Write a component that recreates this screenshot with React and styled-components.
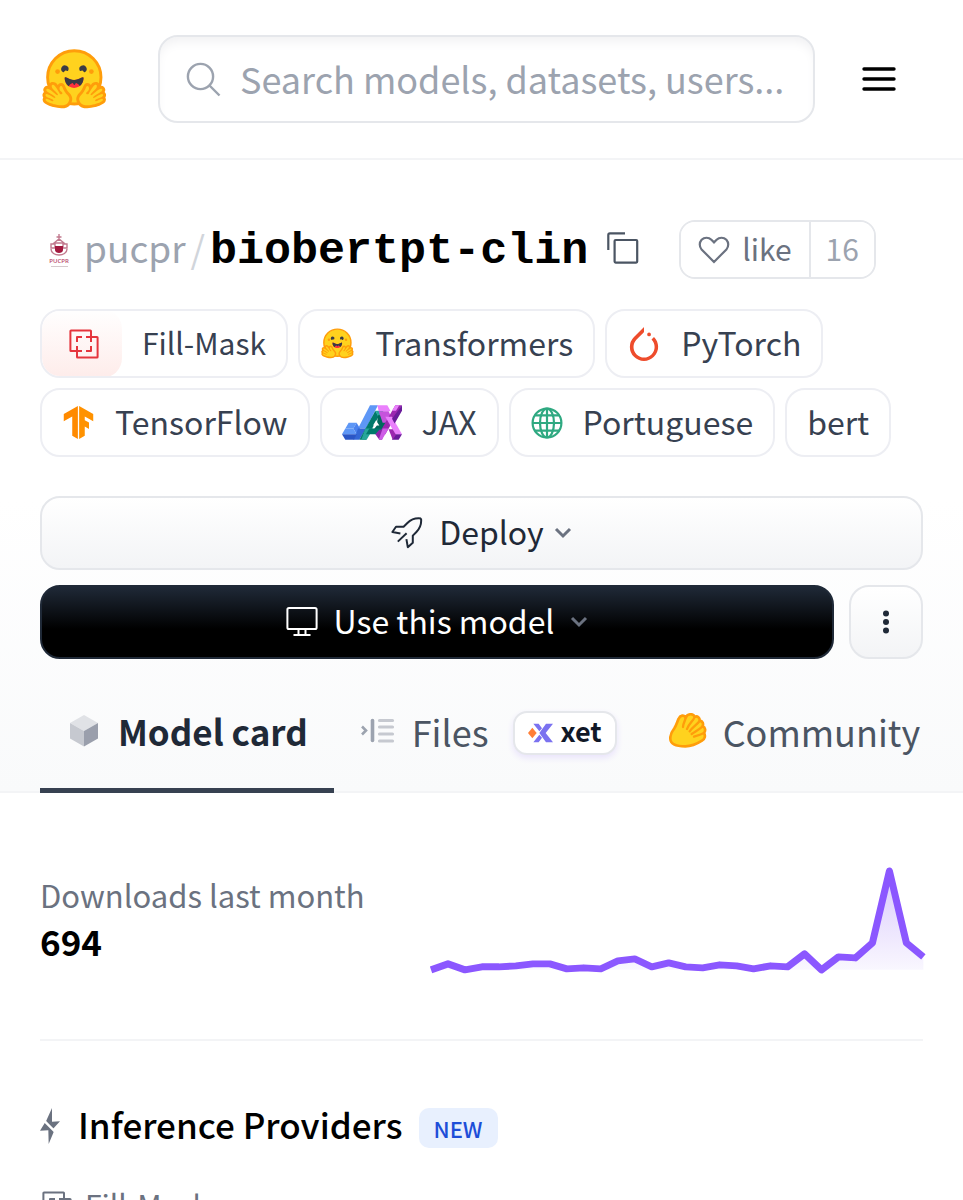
import React from 'react';
import styled, { createGlobalStyle } from 'styled-components';

const GlobalStyle = createGlobalStyle`
  *, *::before, *::after {
    box-sizing: border-box;
  }

  body {
    margin: 0;
    background: #fff;
    color: #000;
    font-family: 'Noto Sans CJK SC', 'Open Sans', sans-serif;
    font-size: 32px;
    line-height: 40px;
  }

  a {
    color: inherit;
    text-decoration: none;
  }

  button, input {
    font: inherit;
    color: inherit;
  }

  svg {
    display: block;
    flex-shrink: 0;
  }

  h1, h2, p, dl, dd {
    margin: 0;
  }
`;

const TopBar = styled.header`
  display: flex;
  align-items: center;
  height: 160px;
  padding: 0 40px;
  border-bottom: 2px solid #f3f4f6;
`;

const SearchBox = styled.label`
  flex: 1;
  min-width: 0;
  display: flex;
  align-items: center;
  gap: 18px;
  height: 88px;
  margin: 0 20px 0 49px;
  padding: 0 24px 0 26px;
  border: 2px solid #e5e7eb;
  border-radius: 20px;
  box-shadow: inset 0 8px 12px -4px #f0f0f2;
  color: #9ca3af;
`;

const SearchInput = styled.input`
  flex: 1;
  min-width: 0;
  height: 60px;
  padding: 0 0 2px;
  border: 0;
  outline: 0;
  background: transparent;
  font-size: 36px;
  line-height: 56px;
  text-overflow: ellipsis;

  &::placeholder {
    color: #9ca3af;
    opacity: 1;
  }
`;

const MenuButton = styled.button`
  display: flex;
  align-items: center;
  justify-content: center;
  width: 88px;
  height: 88px;
  padding: 0;
  border: 0;
  background: none;
`;

const ModelHeader = styled.section`
  padding: 60px 40px 0;
  border-bottom: 2px solid #f3f4f6;
  background: linear-gradient(#fff 54%, #f9fafb);
`;

// the typeface sits low in its line box, so labels next to icons are lifted
const Label = styled.span`
  padding-bottom: 4px;
`;

const TitleRow = styled.div`
  display: flex;
  align-items: center;
  height: 59px;
`;

const Title = styled.h1`
  display: flex;
  align-items: baseline;
  font-size: 37px;
  font-weight: 400;
  line-height: 56px;

  svg {
    align-self: center;
  }
`;

const Owner = styled.a`
  margin-left: 6px;
  color: #9ca3af;
`;

const Slash = styled.span`
  margin: 0 5px;
  color: #d1d5db;
`;

const ModelName = styled.a`
  font-family: 'Liberation Mono', monospace;
  font-size: 45px;
  font-weight: 700;
`;

const CopyButton = styled.button`
  margin: 0 40px 0 19px;
  padding: 0 0 4px;
  border: 0;
  background: none;
  color: #4b5563;
`;

const LikeGroup = styled.div`
  display: flex;
  height: 59px;
  border: 2px solid #e5e7eb;
  border-radius: 16px;
  font-size: 30px;
  overflow: hidden;
`;

const LikeButton = styled.button`
  display: flex;
  align-items: center;
  gap: 12px;
  padding: 0 17px;
  border: 0;
  background: #fff;
  color: #6b7280;
`;

const LikeCount = styled.button`
  padding: 0 15px 4px;
  border: 0;
  border-left: 2px solid #e5e7eb;
  background: #fff;
  color: #9ca3af;
`;

const Tags = styled.div`
  display: flex;
  flex-wrap: wrap;
  gap: 10px;
  margin-top: 30px;
`;

const Tag = styled.a`
  display: flex;
  align-items: center;
  gap: 20px;
  height: 69px;
  padding: 0 20px;
  border: 2px solid #edeef3;
  border-radius: 20px;
  background: #fff;
  color: #374151;
  font-size: ${(props) => (props.$task ? '30px' : '32px')};
  overflow: hidden;
`;

const TaskIcon = styled.span`
  display: flex;
  align-items: center;
  justify-content: center;
  width: 80px;
  height: 69px;
  margin-left: -20px;
  padding-left: 4px;
  border-radius: 20px;
  background: linear-gradient(#fff, #feecea);
  color: #e5353d;
`;

const Actions = styled.div`
  display: flex;
  flex-wrap: wrap;
  gap: 15px;
  margin-top: 39px;
`;

const ActionButton = styled.button`
  display: flex;
  align-items: center;
  justify-content: center;
  gap: ${(props) => (props.$dark ? '16px' : '10px')};
  flex: ${(props) => props.$flex};
  height: 74px;
  padding: 0;
  border: 2px solid ${(props) => (props.$dark ? '#1f2937' : '#e5e7eb')};
  border-radius: 20px;
  background: ${(props) => (props.$dark ? 'linear-gradient(#1f2937, #000 60%)' : 'linear-gradient(#fff, #f3f4f6)')};
  color: ${(props) => (props.$dark ? '#fff' : '#1f2937')};
`;

const DeployLabel = styled(Label)`
  margin-left: 6px;
`;

const Tabs = styled.nav`
  display: flex;
  margin: 14px -40px -2px 0;
  overflow: hidden;
`;

const Tab = styled.a`
  display: flex;
  align-items: center;
  gap: 16px;
  height: 120px;
  padding: 0 26px;
  border-bottom: 5px solid ${(props) => (props.$active ? '#374151' : 'transparent')};
  color: ${(props) => (props.$active ? '#1f2937' : '#4b5563')};
  font-size: ${(props) => (props.$active ? '35px' : '36px')};
  font-weight: ${(props) => (props.$active ? 700 : 400)};
  white-space: nowrap;
`;

const XetBadge = styled.span`
  display: flex;
  align-items: center;
  gap: 8px;
  height: 44px;
  margin: 4px 0 0 8px;
  padding: 0 13px;
  border: 2px solid #e5e7eb;
  border-radius: 14px;
  background: #fff;
  box-shadow: 0 3px 6px #e9e3fb;
  color: #111827;
  font-size: 27px;
  font-weight: 700;
`;

const Content = styled.main`
  padding: 0 40px;
`;

const Downloads = styled.section`
  display: flex;
  align-items: center;
  gap: 66px;
  padding: 75px 0 66px;
  border-bottom: 2px solid #f3f4f6;
`;

const DownloadsStat = styled.dl`
  padding-bottom: 6px;
`;

const DownloadsLabel = styled.dt`
  color: #6b7280;
  font-size: 31px;
  line-height: 48px;
  white-space: nowrap;
`;

const DownloadsCount = styled.dd`
  font-size: 35px;
  font-weight: 700;
  line-height: 44px;
`;

const Chart = styled.svg`
  flex: 1;
  min-width: 0;
  overflow: visible;
`;

const ProvidersHeading = styled.h2`
  display: flex;
  align-items: center;
  gap: 16px;
  margin-top: 61px;
  font-size: 35px;
  font-weight: 500;
  line-height: 44px;
`;

const NewBadge = styled.span`
  margin-top: 4px;
  padding: 0 15px;
  border-radius: 10px;
  background: #e8f0fe;
  color: #1d4ed8;
  font-size: 22px;
  line-height: 40px;
`;

const TaskLink = styled.a`
  display: flex;
  align-items: center;
  gap: 13px;
  margin-top: 34px;
  padding-left: 2px;
  color: #6b7280;
  font-size: 30px;
`;

const HandShape = () => (
  <>
    <path fill="#FF9D0B" d="M17.52 48c-1.62 0-3.06.66-4.07 1.87a5.97 5.97 0 0 0-1.33 3.76 7.1 7.1 0 0 0-1.94-.3c-1.55 0-2.95.59-3.94 1.66a5.8 5.8 0 0 0-.8 7 5.3 5.3 0 0 0-1.79 2.82c-.24.9-.48 2.8.8 4.74a5.22 5.22 0 0 0-.37 5.02c1.02 2.32 3.57 4.14 8.52 6.1 3.07 1.22 5.89 2 5.91 2.01a44.33 44.33 0 0 0 10.93 1.6c5.86 0 10.05-1.8 12.46-5.34 3.88-5.69 3.33-10.9-1.7-15.92-2.77-2.78-4.62-6.87-5-7.77-.78-2.66-2.84-5.62-6.25-5.62a5.7 5.7 0 0 0-4.6 2.46c-1-1.26-1.98-2.25-2.86-2.82A7.4 7.4 0 0 0 17.52 48Z" />
    <path fill="#FFD21E" d="M38.6 76.69c2.75-4.04 2.55-7.07-1.22-10.84-3.78-3.77-5.98-9.3-5.98-9.3s-.82-3.2-2.69-2.9c-1.87.3-3.24 5.08.68 8.01 3.91 2.93-.78 4.92-2.29 2.17-1.5-2.75-5.62-9.82-7.76-11.18-2.13-1.35-3.63-.6-3.13 2.2.5 2.79 9.43 9.55 8.56 11-.87 1.47-3.93-1.71-3.93-1.71s-9.57-8.71-11.66-6.44c-2.08 2.27 1.59 4.17 6.8 7.33 5.23 3.16 5.64 4 4.9 5.2-.75 1.2-12.28-8.53-13.36-4.4-1.08 4.11 11.77 5.3 10.98 8.15-.8 2.85-9.06-5.38-10.74-2.18-1.7 3.21 11.65 6.98 11.76 7.01 4.3 1.12 15.25 3.49 19.08-2.12Z" />
  </>
);

const HuggingFace = ({ width, height }) => (
  <svg width={width} height={height} viewBox="0 0 95 88" aria-hidden="true">
    <circle cx="47.21" cy="41.75" r="36.75" fill="#FFD21E" stroke="#FF9D0B" strokeWidth="4" />
    <path fill="#3A3B45" d="M58.5 32.3c1.28.44 1.78 3.06 3.07 2.38a5 5 0 1 0-6.76-2.07c.61 1.15 2.55-.72 3.7-.32ZM34.95 32.3c-1.28.44-1.79 3.06-3.07 2.38a5 5 0 1 1 6.76-2.07c-.61 1.15-2.56-.72-3.7-.32Z" />
    <path fill="#FF323D" d="M46.96 56.29c9.83 0 13-8.76 13-13.26 0-2.34-1.57-1.6-4.09-.36-2.33 1.15-5.46 2.74-8.9 2.74-7.19 0-13-6.88-13-2.38s3.16 13.26 13 13.26Z" />
    <path fill="#3A3B45" d="M39.43 54a8.7 8.7 0 0 1 5.3-4.49c.4-.12.81.57 1.24 1.28.4.68.82 1.37 1.24 1.37.45 0 .9-.68 1.33-1.35.45-.7.89-1.38 1.32-1.25a8.61 8.61 0 0 1 5 4.17c3.73-2.94 5.1-7.74 5.1-10.7 0-2.34-1.57-1.6-4.09-.36l-.14.07c-2.31 1.15-5.39 2.67-8.77 2.67s-6.45-1.52-8.77-2.67c-2.6-1.29-4.23-2.1-4.23.29 0 3.05 1.46 8.06 5.47 10.97Z" />
    <circle cx="70.71" cy="33.75" r="3.25" fill="#FF9D0B" />
    <circle cx="24.21" cy="33.75" r="3.25" fill="#FF9D0B" />
    <HandShape />
    <g transform="translate(94.4 0) scale(-1 1)">
      <HandShape />
    </g>
  </svg>
);

const SearchIcon = () => (
  <svg width="36" height="36" viewBox="0 0 36 36" fill="none" stroke="currentColor" strokeWidth="2.4" aria-hidden="true">
    <circle cx="14.5" cy="15.5" r="12.6" />
    <path d="M23.5 24.5l10 10" />
  </svg>
);

const MenuIcon = () => (
  <svg width="34" height="26" viewBox="0 0 34 26" stroke="#000" strokeWidth="3.4" strokeLinecap="round" aria-hidden="true">
    <path d="M2 3h30M2 13h30M2 23h30" />
  </svg>
);

// university crest with its wordmark
const Avatar = () => (
  <svg width="38" height="40" viewBox="0 0 38 40" aria-hidden="true">
    <g fill="none" stroke="#c27a8f" strokeWidth="1.4">
      <path d="M19 4v7M16.5 7h5M14 13l5-4 5 4zM11 14h4v4h-4zM23 14h4v4h-4zM11 19c0 4 4 6 8 6s8-2 8-6" />
    </g>
    <path d="M15 16h8v4c0 2-2 3-4 3-2 0-4-1-4-3z" fill="#a3193f" />
    <text x="19" y="33" textAnchor="middle" fontSize="6" fontWeight="600" fill="#b8476a" fontFamily="Open Sans, sans-serif">PUCPR</text>
    <path d="M11 36.5h17" stroke="#d5c9cd" />
  </svg>
);

const CopyIcon = () => (
  <svg width="32" height="32" viewBox="0 0 32 32" fill="none" stroke="currentColor" strokeWidth="2.2" aria-hidden="true">
    <rect x="7.6" y="8" width="22.6" height="22.6" rx="1" />
    <path d="M1.3 18V3q0-1.6 1.6-1.6H18" />
  </svg>
);

const HeartIcon = () => (
  <svg width="32" height="28" viewBox="0 0 32 28" fill="none" stroke="currentColor" strokeWidth="2.2" aria-hidden="true">
    <path d="M16 26L3.6 13.4a7.2 7.2 0 0 1 0-9.6 6.9 6.9 0 0 1 9.8 0L16 6.4l2.6-2.6a6.9 6.9 0 0 1 9.8 0 7.2 7.2 0 0 1 0 9.6z" />
  </svg>
);

const MaskIcon = ({ size = 30 }) => (
  <svg width={size} height={size} viewBox="0 0 30 30" fill="none" stroke="currentColor" strokeWidth="2" strokeLinejoin="round" aria-hidden="true">
    <path d="M22 13V2q0-.6-.6-.6H2q-.6 0-.6.6v19.4q0 .6.6.6h11" />
    <path d="M8 17v11q0 .6.6.6H28q.6 0 .6-.6V8.6q0-.6-.6-.6H17" />
    <path d="M8 13V8h5M22 17v5h-5" />
  </svg>
);

const PyTorchIcon = () => (
  <svg width="34" height="34" viewBox="0 0 24 24" fill="#EE4C2C" aria-hidden="true">
    <path d="M12.005 0L4.952 7.053a9.865 9.865 0 0 0 0 14.022 9.866 9.866 0 0 0 14.022 0c3.984-3.9 3.986-10.205.085-14.023l-1.744 1.743c2.904 2.905 2.904 7.634 0 10.538s-7.634 2.904-10.538 0-2.904-7.634 0-10.538l4.647-4.646.582-.665zm3.568 3.899a1.327 1.327 0 0 0-1.327 1.327 1.327 1.327 0 0 0 1.327 1.328A1.327 1.327 0 0 0 16.9 5.226 1.327 1.327 0 0 0 15.573 3.9z" />
  </svg>
);

const TensorFlowIcon = () => (
  <svg width="33" height="33" viewBox="0 0 24 24" aria-hidden="true">
    <path fill="#FF8A00" d="M1.292 5.856L11.54 0v24l-4.095-2.378V7.603l-6.168 3.564z" />
    <path fill="#FF9200" d="M22.723 11.167l-.014-5.31L12.46 0v24l4.095-2.378V14.87l3.092 1.788-.018-4.618-3.074-1.756V7.603z" />
  </svg>
);

// drawn on an isometric grid, 10 units a column and 17 a row
const JaxIcon = () => (
  <svg width="60" height="35" viewBox="0 0 180 104" aria-hidden="true">
    <path fill="#5e97f6" d="M84 0h24L72 70H48zM20 53h24l-10 17H10z" />
    <path fill="#4a82ee" d="M34 70l10-17 10 17-10 17z" />
    <path fill="#5e97f6" d="M10 70h24l10 17H0z" />
    <path fill="#3367d6" d="M48 70h24L52 104H34l8-17z" />
    <path fill="#2a56c6" d="M0 87h44l-8 17H10z" />
    <path fill="#00796b" d="M100 17l10 17-38 70H52z" />
    <path fill="#26a69a" d="M70 70h24l-20 34H58z" />
    <path fill="#26a69a" d="M100 17h22l10 17h-24z" />
    <path fill="#00695c" d="M108 30h18l14 26-16 24H90l14-18z" />
    <path fill="#fff" d="M102 46l10 15H93z" />
    <path fill="#00796b" d="M82 70h38l-10 17H72z" />
    <path fill="#ea80fc" d="M106 0h30l10 18h-36z" />
    <path fill="#c653dc" d="M110 18h30l8 18-8 17h-18z" />
    <path fill="#9c27b0" d="M160 0h20l-50 87h-20z" />
    <path fill="#8e24aa" d="M112 74h18l-10 30h-8l-12-17z" />
    <path fill="#ce5ce6" d="M122 70h18l-20 34h-10z" />
    <path fill="#ea80fc" d="M130 35h20l30 52h-20z" />
    <path fill="#ea80fc" d="M150 17l10-17h12l-10 17z" />
    <path fill="#6a1b9a" d="M160 87h20l-10 17h-20zM180 0v17l-22 38-8-14z" />
    <path fill="#9c27b0" d="M140 72h12l10 17-10 15z" />
  </svg>
);

const GlobeIcon = () => (
  <svg width="32" height="32" viewBox="0 0 32 32" fill="none" stroke="#2fa981" strokeWidth="2.2" aria-hidden="true">
    <circle cx="16" cy="16" r="14.4" />
    <ellipse cx="16" cy="16" rx="7" ry="14.4" />
    <path d="M16 1.6v28.8M1.6 16h28.8M4 8.4h24M4 23.6h24" />
  </svg>
);

const RocketIcon = () => (
  <svg width="32" height="32" viewBox="0 0 32 32" fill="none" stroke="currentColor" strokeWidth="2" strokeLinejoin="round" aria-hidden="true">
    <path d="M30 1.4c-6-.8-10 1-13.6 4.6L12.6 9.8H5L1.4 15l8 1.4" />
    <path d="M30 1.4c.8 6-1 10-4.6 13.6l-3.6 3.6v7.2l-5 4.4-1.4-8" />
    <path d="M15.6 16.2L6.8 24.6" />
  </svg>
);

const MonitorIcon = () => (
  <svg width="32" height="32" viewBox="0 0 32 32" fill="none" stroke="currentColor" strokeWidth="2" aria-hidden="true">
    <rect x="1.4" y="2" width="29.2" height="21" rx="1.6" />
    <path d="M12.5 23v6M19.5 23v6M7.5 29h17" />
  </svg>
);

const Chevron = () => (
  <svg width="18" height="12" viewBox="0 0 18 12" fill="none" stroke="#6b7280" strokeWidth="3" aria-hidden="true">
    <path d="M2 2l7 7 7-7" />
  </svg>
);

const DotsIcon = () => (
  <svg width="8" height="24" viewBox="0 0 8 24" fill="currentColor" aria-hidden="true">
    <circle cx="4" cy="3.5" r="3" />
    <circle cx="4" cy="12" r="3" />
    <circle cx="4" cy="20.5" r="3" />
  </svg>
);

const CubeIcon = () => (
  <svg width="36" height="34" viewBox="0 0 36 34" aria-hidden="true">
    <path fill="#e0e2e6" d="M18 1l14 8-14 8L4 9z" />
    <path fill="#c6c9d0" d="M4 9l14 8v15.5L4 24.5z" />
    <path fill="#9a9fac" d="M32 9l-14 8v15.5l14-8z" />
  </svg>
);

const FilesIcon = () => (
  <svg width="36" height="28" viewBox="0 0 36 28" fill="none" aria-hidden="true">
    <path d="M2 9.5l4 4-4 4" stroke="#9ca3af" strokeWidth="2.6" />
    <path d="M12.5 3.5v20" stroke="#9ca3af" strokeWidth="3.6" strokeLinecap="round" />
    <path d="M19.5 3.5h13M19.5 10h13M19.5 17h13M19.5 24h13" stroke="#c6c9d0" strokeWidth="3.2" strokeLinecap="round" />
  </svg>
);

const XetIcon = () => (
  <svg width="25" height="20" viewBox="0 0 75 60" aria-hidden="true">
    <path fill="#ff7f37" d="M13 14l13 16-13 16L0 30z" />
    <path fill="#7b72f0" d="M16 2h16l10 14-8 9zM16 58h16l10-14-8-9zM54 2h21L53 30l22 28H54L34 30z" />
  </svg>
);

const ClapIcon = () => (
  <svg width="38" height="35" viewBox="0 0 114 105" aria-hidden="true">
    <path
      fill="#ffd21e"
      stroke="#ff9d0b"
      strokeWidth="8"
      strokeLinejoin="round"
      d="M4 78c-1-12 4-22 12-32 6-9 8-19 13-29 4-10 17-13 21-3 5-12 22-14 27-3 9-3 16 3 15 12 9 1 12 9 9 17 9 3 9 14 4 20 5 8 3 18-6 23-14 9-31 17-50 17-23 0-44-4-45-22z"
    />
    <path
      fill="none"
      stroke="#ff9d0b"
      strokeWidth="7"
      strokeLinecap="round"
      d="M50 14c-1 10-8 17-8 28M77 12c-4 12-18 20-23 36M92 24c-9 12-22 19-30 31M101 40c-10 9-22 15-33 23M105 60c-10 5-20 8-30 11"
    />
  </svg>
);

const BoltIcon = () => (
  <svg width="22" height="36" viewBox="0 0 66 108" fill="#6b7280" aria-hidden="true">
    <path d="M36 0L18 40l20 24 22-24-24 1zM26 108l16-38-26-28L0 68l25-1z" />
    <path d="M12 38l36 36" stroke="#fff" strokeWidth="7" />
  </svg>
);

const downloads = [0, 6, 0, 3, 3, 4, 6, 6, 1, 2, 1, 9, 11, 3, 7, 3, 2, 5, 4, 1, 4, 3, 16, 0, 13, 12, 27, 99, 27, 13];

const DownloadsChart = () => {
  const points = downloads.map((value, i) => `${i * 17},${102 - value}`).join(' ');
  return (
    <Chart viewBox="0 0 493 105" role="img" aria-label="Daily downloads">
      <defs>
        <linearGradient id="fade" x1="0" y1="0" x2="0" y2="1">
          <stop offset="0" stopColor="#8b5cf6" stopOpacity="0.32" />
          <stop offset="1" stopColor="#8b5cf6" stopOpacity="0.05" />
        </linearGradient>
      </defs>
      <polygon points={`0,102 ${points} 493,102`} fill="url(#fade)" />
      <polyline points={points} fill="none" stroke="#8b57ff" strokeWidth="7" strokeLinejoin="round" />
    </Chart>
  );
};

const tags = [
  { label: 'Fill-Mask', icon: <TaskIcon><MaskIcon /></TaskIcon>, task: true },
  { label: 'Transformers', icon: <HuggingFace width={35} height={33} /> },
  { label: 'PyTorch', icon: <PyTorchIcon /> },
  { label: 'TensorFlow', icon: <TensorFlowIcon /> },
  { label: 'JAX', icon: <JaxIcon /> },
  { label: 'Portuguese', icon: <GlobeIcon /> },
  { label: 'bert' },
];

export default function App() {
  return (
    <>
      <GlobalStyle />
      <TopBar>
        <a href="#home" aria-label="Home">
          <HuggingFace width={69} height={64} />
        </a>
        <SearchBox>
          <SearchIcon />
          <SearchInput type="text" placeholder="Search models, datasets, users..." aria-label="Search" />
        </SearchBox>
        <MenuButton type="button" aria-label="Menu">
          <MenuIcon />
        </MenuButton>
      </TopBar>

      <ModelHeader>
        <TitleRow>
          <Title>
            <Avatar />
            <Owner href="#pucpr">pucpr</Owner>
            <Slash>/</Slash>
            <ModelName href="#model">biobertpt-clin</ModelName>
          </Title>
          <CopyButton type="button" aria-label="Copy model name">
            <CopyIcon />
          </CopyButton>
          <LikeGroup>
            <LikeButton type="button">
              <HeartIcon />
              <Label>like</Label>
            </LikeButton>
            <LikeCount type="button">16</LikeCount>
          </LikeGroup>
        </TitleRow>

        <Tags>
          {tags.map((tag) => (
            <Tag key={tag.label} href={`#${tag.label}`} $task={tag.task}>
              {tag.icon}
              <Label>{tag.label}</Label>
            </Tag>
          ))}
        </Tags>

        <Actions>
          <ActionButton type="button" $flex="1 0 100%">
            <RocketIcon />
            <DeployLabel>Deploy</DeployLabel>
            <Chevron />
          </ActionButton>
          <ActionButton type="button" $flex="1" $dark>
            <MonitorIcon />
            <Label>Use this model</Label>
            <Chevron />
          </ActionButton>
          <ActionButton type="button" $flex="0 0 74px" aria-label="More actions">
            <DotsIcon />
          </ActionButton>
        </Actions>

        <Tabs>
          <Tab href="#card" $active>
            <CubeIcon />
            Model card
          </Tab>
          <Tab href="#files">
            <FilesIcon />
            Files
            <XetBadge>
              <XetIcon />
              <Label>xet</Label>
            </XetBadge>
          </Tab>
          <Tab href="#community">
            <ClapIcon />
            Community
          </Tab>
        </Tabs>
      </ModelHeader>

      <Content>
        <Downloads>
          <DownloadsStat>
            <DownloadsLabel>Downloads last month</DownloadsLabel>
            <DownloadsCount>694</DownloadsCount>
          </DownloadsStat>
          <DownloadsChart />
        </Downloads>

        <ProvidersHeading>
          <BoltIcon />
          <Label>Inference Providers</Label>
          <NewBadge>NEW</NewBadge>
        </ProvidersHeading>
        <TaskLink href="#fill-mask">
          <MaskIcon />
          <Label>Fill-Mask</Label>
        </TaskLink>
      </Content>
    </>
  );
}
